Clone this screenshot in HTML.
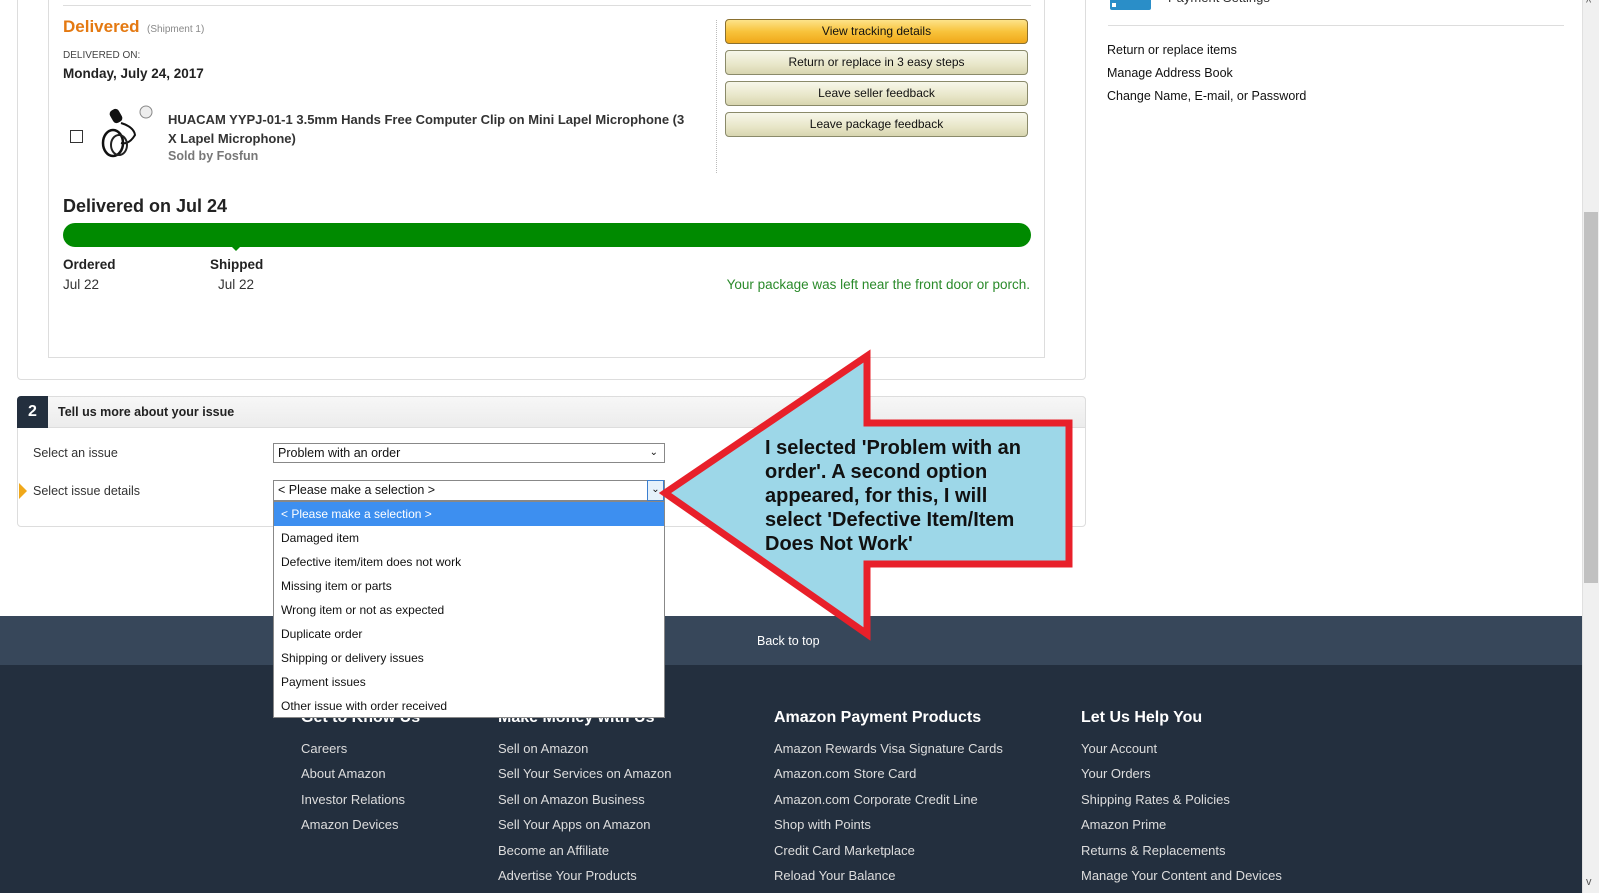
<!DOCTYPE html>
<html><head><meta charset="utf-8"><style>
*{margin:0;padding:0;box-sizing:border-box}
body{width:1599px;height:893px;overflow:hidden;background:#fff;font-family:"Liberation Sans",sans-serif;position:relative;color:#111}
.a{position:absolute;white-space:nowrap}
.n{font-family:"Liberation Sans Narrow","Liberation Sans",sans-serif}
.btn{position:absolute;left:725px;width:303px;height:25px;border:1px solid #8a8a6a;border-radius:4px;background:linear-gradient(#f7f7ea,#e8e6c8 60%,#d8d5b0);font-size:12px;text-align:center;line-height:23px;color:#111}
.fl{position:absolute;color:#ddd;font-size:13px;white-space:nowrap}
.fh{position:absolute;color:#fff;font-size:16px;font-weight:bold;white-space:nowrap}
.opt{height:24px;line-height:24px;padding-left:7px;font-size:12px;color:#111}
</style></head><body>
<div class="a" style="left:17px;top:-5px;width:1069px;height:385px;border:1px solid #ddd;border-radius:4px"></div>
<div class="a" style="left:48px;top:-5px;width:997px;height:363px;border:1px solid #ddd"></div>
<div class="a" style="left:63px;top:5px;width:968px;height:1px;background:#ddd"></div>
<div class="a n" style="left:63px;top:17px;font-size:17px;font-weight:bold;color:#e47911">Delivered <span style="font-size:10px;color:#888;font-weight:normal">&nbsp;(Shipment 1)</span></div>
<div class="a n" style="left:63px;top:50px;font-size:10px;color:#444">DELIVERED ON:</div>
<div class="a n" style="left:63px;top:66px;font-size:13.5px;font-weight:bold;color:#222">Monday, July 24, 2017</div>
<div class="a" style="left:70px;top:130px;width:13px;height:13px;border:1px solid #333;background:#fff"></div>
<svg class="a" style="left:99px;top:105px" width="58" height="56" viewBox="0 0 58 56"><circle cx="47" cy="7" r="6" fill="#eee" stroke="#888"/><rect x="12" y="4" width="10" height="14" rx="4" fill="#111" transform="rotate(-30 17 11)"/><path d="M22 18 Q35 22 36 30 Q30 40 22 38" stroke="#111" stroke-width="2" fill="none"/><ellipse cx="14" cy="38" rx="10" ry="13" stroke="#111" stroke-width="2.5" fill="none"/><ellipse cx="20" cy="40" rx="8" ry="10" stroke="#222" stroke-width="2" fill="none"/></svg>
<div class="a n" style="left:168px;top:110px;font-size:13px;font-weight:bold;color:#333;line-height:19px;white-space:normal;width:522px">HUACAM YYPJ-01-1 3.5mm Hands Free Computer Clip on Mini Lapel Microphone (3 X Lapel Microphone)</div>
<div class="a n" style="left:168px;top:149px;font-size:12.5px;font-weight:bold;color:#777">Sold by Fosfun</div>
<div class="a" style="left:716px;top:20px;height:153px;border-left:1px dotted #bbb"></div>
<div class="btn" style="top:19px;background:linear-gradient(#fde38a,#f8c33c 50%,#f0a81a);border-color:#8a7030">View tracking details</div>
<div class="btn" style="top:50px">Return or replace in 3 easy steps</div>
<div class="btn" style="top:81px">Leave seller feedback</div>
<div class="btn" style="top:112px">Leave package feedback</div>
<div class="a n" style="left:63px;top:196px;font-size:18px;font-weight:bold;color:#222">Delivered on Jul 24</div>
<div class="a" style="left:63px;top:223px;width:968px;height:24px;border-radius:12px;background:#008a00"></div>
<div class="a" style="left:231px;top:246px;width:0;height:0;border-left:5px solid transparent;border-right:5px solid transparent;border-top:5px solid #008a00"></div>
<div class="a n" style="left:63px;top:257px;font-size:13.5px;font-weight:bold;color:#222">Ordered</div>
<div class="a n" style="left:63px;top:277px;font-size:13.5px;color:#333">Jul 22</div>
<div class="a n" style="left:210px;top:257px;font-size:13.5px;font-weight:bold;color:#222">Shipped</div>
<div class="a n" style="left:218px;top:277px;font-size:13.5px;color:#333">Jul 22</div>
<div class="a n" style="right:569px;top:277px;font-size:13.5px;color:#2a8a2a">Your package was left near the front door or porch.</div>
<div class="a" style="left:1110px;top:-4px;width:41px;height:14px;background:#2a8ec8;border-radius:2px"></div>
<div class="a" style="left:1112px;top:3px;width:4px;height:4px;background:#fff"></div>
<div class="a" style="left:1168px;top:-10px;font-size:13px;color:#333">Payment Settings</div>
<div class="a" style="left:1108px;top:25px;width:456px;height:1px;background:#ddd"></div>
<div class="a" style="left:1107px;top:43px;font-size:12.5px;color:#111">Return or replace items</div>
<div class="a" style="left:1107px;top:66px;font-size:12.5px;color:#111">Manage Address Book</div>
<div class="a" style="left:1107px;top:89px;font-size:12.5px;color:#111">Change Name, E-mail, or Password</div>
<div class="a" style="left:1582px;top:0;width:17px;height:893px;background:#f0f0f0;border-left:1px solid #e0e0e0"></div>
<div class="a" style="left:1584px;top:212px;width:14px;height:371px;background:#c1c1c1"></div>
<div class="a" style="left:1586px;top:-3px;font-size:11px;color:#555">^</div>
<div class="a" style="left:1586px;top:876px;font-size:11px;color:#555">v</div>
<div class="a" style="left:17px;top:396px;width:1069px;height:131px;border:1px solid #ddd;border-radius:4px"></div>
<div class="a" style="left:17px;top:396px;width:1069px;height:32px;background:linear-gradient(#f7f7f7,#ececec);border:1px solid #ddd;border-radius:4px 4px 0 0"></div>
<div class="a" style="left:17px;top:396px;width:31px;height:32px;background:#232f3e;color:#fff;font-weight:bold;font-size:16px;text-align:center;line-height:32px;border-radius:4px 0 0 0">2</div>
<div class="a n" style="left:58px;top:405px;font-size:12.5px;font-weight:bold;color:#222">Tell us more about your issue</div>
<div class="a n" style="left:33px;top:446px;font-size:12.5px;color:#333">Select an issue</div>
<div class="a" style="left:19px;top:483px;width:0;height:0;border-top:8px solid transparent;border-bottom:8px solid transparent;border-left:8px solid #f0a81a"></div>
<div class="a n" style="left:33px;top:484px;font-size:12.5px;color:#333">Select issue details</div>
<div class="a n" style="left:273px;top:443px;width:392px;height:20px;border:1px solid #888;font-size:12.5px;line-height:18px;padding-left:4px;color:#111">Problem with an order<span style="position:absolute;right:6px;top:0;font-size:10px">&#8964;</span></div>
<div class="a n" style="left:273px;top:480px;width:392px;height:21px;border:1px solid #888;font-size:12.5px;line-height:19px;padding-left:4px;color:#111">&lt; Please make a selection &gt;<span style="position:absolute;right:0;top:-1px;width:17px;height:21px;border:1px solid #3c7fd0;background:#e5f1fb;text-align:center;font-size:10px;line-height:17px">&#8964;</span></div>
<div class="a" style="left:0;top:616px;width:1582px;height:49px;background:#37475a"></div>
<div class="a" style="left:757px;top:634px;font-size:12.5px;color:#fff">Back to top</div>
<div class="a" style="left:0;top:665px;width:1582px;height:228px;background:#232f3e"></div>
<div class="fh" style="left:301px;top:709px">Get to Know Us</div>
<div class="fh" style="left:498px;top:709px">Make Money with Us</div>
<div class="fh" style="left:774px;top:709px">Amazon Payment Products</div>
<div class="fh" style="left:1081px;top:709px">Let Us Help You</div>
<div class="fl" style="left:301px;top:741px">Careers</div>
<div class="fl" style="left:301px;top:766px">About Amazon</div>
<div class="fl" style="left:301px;top:792px">Investor Relations</div>
<div class="fl" style="left:301px;top:817px">Amazon Devices</div>
<div class="fl" style="left:498px;top:741px">Sell on Amazon</div>
<div class="fl" style="left:498px;top:766px">Sell Your Services on Amazon</div>
<div class="fl" style="left:498px;top:792px">Sell on Amazon Business</div>
<div class="fl" style="left:498px;top:817px">Sell Your Apps on Amazon</div>
<div class="fl" style="left:498px;top:843px">Become an Affiliate</div>
<div class="fl" style="left:498px;top:868px">Advertise Your Products</div>
<div class="fl" style="left:774px;top:741px">Amazon Rewards Visa Signature Cards</div>
<div class="fl" style="left:774px;top:766px">Amazon.com Store Card</div>
<div class="fl" style="left:774px;top:792px">Amazon.com Corporate Credit Line</div>
<div class="fl" style="left:774px;top:817px">Shop with Points</div>
<div class="fl" style="left:774px;top:843px">Credit Card Marketplace</div>
<div class="fl" style="left:774px;top:868px">Reload Your Balance</div>
<div class="fl" style="left:1081px;top:741px">Your Account</div>
<div class="fl" style="left:1081px;top:766px">Your Orders</div>
<div class="fl" style="left:1081px;top:792px">Shipping Rates &amp; Policies</div>
<div class="fl" style="left:1081px;top:817px">Amazon Prime</div>
<div class="fl" style="left:1081px;top:843px">Returns &amp; Replacements</div>
<div class="fl" style="left:1081px;top:868px">Manage Your Content and Devices</div>
<div class="a n" style="left:273px;top:501px;width:392px;height:217px;background:#fff;border:1px solid #888">
<div class="opt" style="background:#3d8ff0;color:#fff">&lt; Please make a selection &gt;</div>
<div class="opt">Damaged item</div>
<div class="opt">Defective item/item does not work</div>
<div class="opt">Missing item or parts</div>
<div class="opt">Wrong item or not as expected</div>
<div class="opt">Duplicate order</div>
<div class="opt">Shipping or delivery issues</div>
<div class="opt">Payment issues</div>
<div class="opt">Other issue with order received</div>
</div>
<svg class="a" style="left:0;top:0" width="1599" height="893"><polygon points="665,493 867,356 867,423 1069,423 1069,564 867,564 867,634" fill="#9dd7e8" stroke="#e8202a" stroke-width="7" stroke-linejoin="miter"/></svg>
<div class="a" style="left:765px;top:436px;font-size:20px;font-weight:bold;color:#111;line-height:24px;white-space:normal;width:272px">I selected 'Problem with an order'. A second option appeared, for this, I will select 'Defective Item/Item Does Not Work'</div>
</body></html>
